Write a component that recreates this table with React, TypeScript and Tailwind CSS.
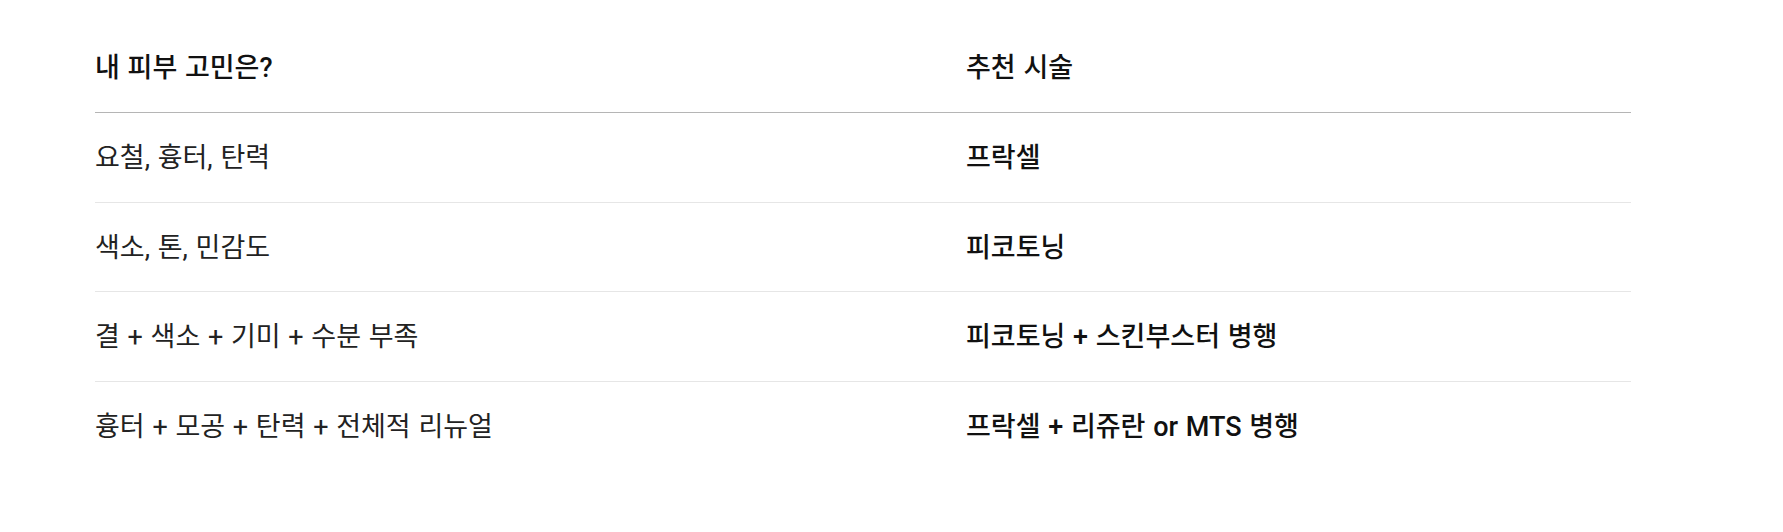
const rows = [
  { concern: "요철, 흉터, 탄력", treatment: "프락셀" },
  { concern: "색소, 톤, 민감도", treatment: "피코토닝" },
  { concern: "결 + 색소 + 기미 + 수분 부족", treatment: "피코토닝 + 스킨부스터 병행" },
  { concern: "흉터 + 모공 + 탄력 + 전체적 리뉴얼", treatment: "프락셀 + 리쥬란 or MTS 병행" },
];

export default function App() {
  return (
    <main
      className="min-h-screen bg-white pl-[95px] pt-[23px]"
      style={{ fontFamily: 'Roboto, "Noto Sans CJK KR", sans-serif' }}
    >
      <div className="w-[1536px] text-[27px] leading-[36px] text-[#111] [word-spacing:1px]">
        <div className="grid grid-cols-[871px_1fr] border-b-[1.5px] border-[#b5b5b5]">
          <div className="flex h-[89px] items-center font-medium">내 피부 고민은?</div>
          <div className="flex h-[89px] items-center font-medium">추천 시술</div>
        </div>
        {rows.map((row, i) => (
          <div
            key={row.concern}
            className={
              i < rows.length - 1
                ? "grid grid-cols-[871px_1fr] border-b-[1.5px] border-[#e6e6e6]"
                : "grid grid-cols-[871px_1fr]"
            }
          >
            <div className="flex h-[88.5px] items-center pt-[2px] text-[#222]">{row.concern}</div>
            <div className="flex h-[88.5px] items-center pt-[2px] font-medium">{row.treatment}</div>
          </div>
        ))}
      </div>
    </main>
  );
}
